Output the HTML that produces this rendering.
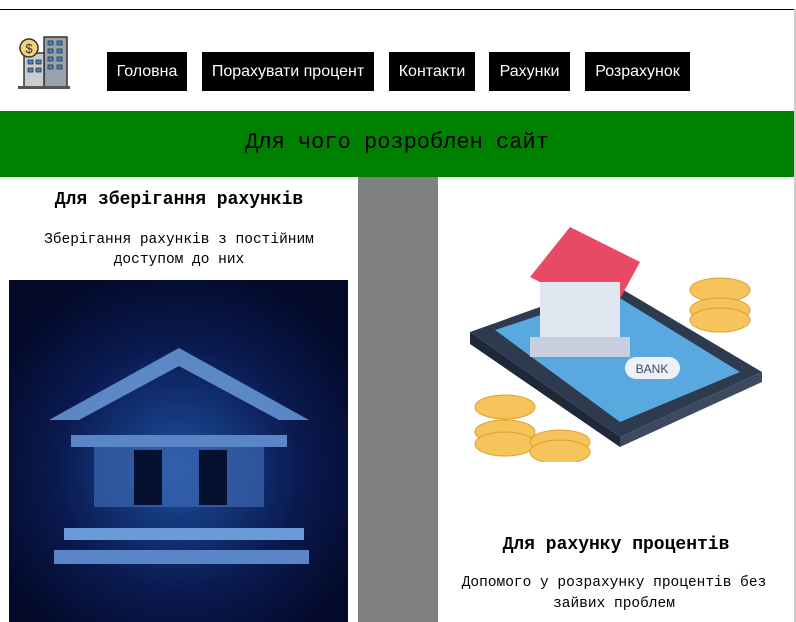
<!DOCTYPE html>
<html><head><meta charset="utf-8"><style>
body{margin:0;width:796px;height:622px;overflow:hidden;background:#fff;position:relative;font-family:"Liberation Sans",sans-serif}
.a{position:absolute}
.btn{position:absolute;top:52px;height:39px;background:#000;color:#fff;font-size:16px;line-height:39px;text-align:center}
.mono{font-family:"Liberation Mono",monospace;text-align:center}
</style></head><body>
<div class="a" style="left:0;top:9px;width:794px;height:1px;background:#000"></div>
<div class="a" style="left:794px;top:9px;width:2px;height:613px;background:#ccc"></div>
<svg class="a" style="left:16px;top:36px" width="56" height="55" viewBox="0 0 56 55">
<rect x="28" y="1" width="23" height="50" fill="#9aa3ad" stroke="#333" stroke-width="1.5"/>
<rect x="8" y="17" width="20" height="34" fill="#c9ccd0" stroke="#333" stroke-width="1.5"/>
<g fill="#3a86c8" stroke="#333" stroke-width="0.8"><rect x="32" y="5" width="5" height="4"/><rect x="41" y="5" width="5" height="4"/><rect x="32" y="13" width="5" height="4"/><rect x="41" y="13" width="5" height="4"/><rect x="32" y="21" width="5" height="4"/><rect x="41" y="21" width="5" height="4"/><rect x="32" y="29" width="5" height="4"/><rect x="41" y="29" width="5" height="4"/><rect x="12" y="24" width="5" height="4"/><rect x="20" y="24" width="5" height="4"/><rect x="12" y="32" width="5" height="4"/><rect x="20" y="32" width="5" height="4"/></g>
<rect x="2" y="50" width="52" height="3" fill="#555"/>
<circle cx="13" cy="12" r="9" fill="#f6d17a" stroke="#333" stroke-width="1.5"/>
<text x="13" y="17" font-size="13" text-anchor="middle" font-family="Liberation Sans" fill="#333">$</text>
</svg>
<div class="btn" style="left:107px;width:80px">Головна</div>
<div class="btn" style="left:202px;width:172px">Порахувати процент</div>
<div class="btn" style="left:389px;width:86px">Контакти</div>
<div class="btn" style="left:489px;width:81px">Рахунки</div>
<div class="btn" style="left:585px;width:105px">Розрахунок</div>
<div class="a mono" style="left:0;top:111px;width:794px;height:66px;background:#008000;line-height:64px;font-size:22px">Для чого розроблен сайт</div>
<div class="a" style="left:358px;top:177px;width:80px;height:445px;background:#808080"></div>
<div class="a mono" style="left:0;top:190px;width:358px;font-size:18px;font-weight:bold">Для зберігання рахунків</div>
<div class="a mono" style="left:25px;top:230px;width:308px;font-size:14.5px;line-height:20px">Зберігання рахунків з постійним доступом до них</div>
<svg class="a" style="left:9px;top:280px" width="339" height="342" viewBox="0 0 339 342">
<defs><radialGradient id="g" cx="50%" cy="55%" r="60%"><stop offset="0" stop-color="#1d4fa0"/><stop offset="0.6" stop-color="#0a1a50"/><stop offset="1" stop-color="#030a2a"/></radialGradient></defs>
<rect width="339" height="342" fill="url(#g)"/>
<polygon points="40,140 170,68 300,140 270,140 170,86 70,140" fill="#6a9ad8" opacity="0.85"/>
<rect x="62" y="155" width="216" height="12" fill="#5a86c8"/>
<rect x="85" y="167" width="170" height="60" fill="#3a66b0" opacity="0.7"/>
<rect x="125" y="170" width="28" height="55" fill="#061030"/>
<rect x="190" y="170" width="28" height="55" fill="#061030"/>
<rect x="55" y="248" width="240" height="12" fill="#6a9ad8"/>
<rect x="45" y="270" width="255" height="14" fill="#5a86c8"/>
</svg>
<svg class="a" style="left:470px;top:222px" width="295" height="240" viewBox="0 0 295 240">
<polygon points="0,110 140,60 292,150 150,215" fill="#2e3a4e"/>
<polygon points="25,108 140,70 270,150 150,200" fill="#5aa8e0"/>
<polygon points="0,110 150,215 150,225 0,122" fill="#1f2838"/>
<polygon points="150,215 292,150 292,160 150,225" fill="#3c4a60"/>
<polygon points="60,55 100,5 170,40 140,95" fill="#e84a65"/>
<rect x="70" y="60" width="80" height="60" fill="#e0e6f0"/>
<rect x="60" y="115" width="100" height="20" fill="#c8d0e0"/>
<rect x="155" y="135" width="55" height="22" rx="11" fill="#eef2f8"/>
<text x="182" y="151" font-size="12" text-anchor="middle" fill="#3a4a60" font-family="Liberation Sans">BANK</text>
<g fill="#f6c45a" stroke="#e0a030"><ellipse cx="250" cy="68" rx="30" ry="12"/><ellipse cx="250" cy="88" rx="30" ry="12"/><ellipse cx="250" cy="98" rx="30" ry="12"/></g>
<g fill="#f6c45a" stroke="#e0a030"><ellipse cx="35" cy="185" rx="30" ry="12"/><ellipse cx="35" cy="210" rx="30" ry="12"/><ellipse cx="35" cy="222" rx="30" ry="12"/></g>
<g fill="#f6c45a" stroke="#e0a030"><ellipse cx="90" cy="220" rx="30" ry="12"/><ellipse cx="90" cy="230" rx="30" ry="12"/></g>
</svg>
<div class="a mono" style="left:438px;top:535px;width:356px;font-size:18px;font-weight:bold">Для рахунку процентів</div>
<div class="a mono" style="left:455px;top:573px;width:318px;font-size:14.5px;line-height:21px">Допомого у розрахунку процентів без зайвих проблем</div>
</body></html>
